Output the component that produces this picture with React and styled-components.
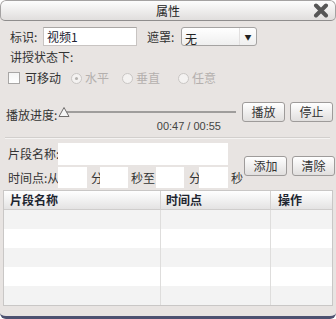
import React from 'react'
import styled, { createGlobalStyle } from 'styled-components'

const GlobalStyle = createGlobalStyle`
  html, body { margin: 0; padding: 0; background: #ffffff; }
  body { font-family: "Noto Sans CJK SC", "Liberation Sans", sans-serif; font-size: 12px; color: #333; }
  * { box-sizing: border-box; }
`

const Window = styled.div`
  width: 336px;
  height: 319px;
  background: #e8e4e2;
  border-radius: 6px;
  border-bottom: 3px solid #4d5170;
  display: flex;
  flex-direction: column;
  overflow: hidden;
`

const TitleBar = styled.div`
  height: 21px;
  flex: none;
  display: grid;
  grid-template-columns: 1fr auto 1fr;
  align-items: center;
  background: linear-gradient(#fdfdfd, #e0dedd);
  border: 1px solid #a4a2a2;
  border-bottom-color: #8f8d8d;
  border-radius: 6px 6px 5px 5px;
  font-size: 12px;
  color: #222;
`

const Title = styled.span`
  grid-column: 2;
  line-height: 19px;
`

const Close = styled.span`
  grid-column: 3;
  justify-self: end;
  margin-right: 6px;
  display: flex;
`

const Body = styled.div`
  flex: 1;
  display: flex;
  flex-direction: column;
  padding: 0 3px;
`

const Row = styled.div`
  display: flex;
  align-items: center;
  height: ${p => p.$h || 19}px;
  margin-top: ${p => p.$mt || 0}px;
  padding-left: ${p => p.$pl || 0}px;
`

const Label = styled.span`
  width: ${p => p.$w ? p.$w + 'px' : 'auto'};
  margin-left: ${p => p.$ml || 0}px;
  margin-right: ${p => p.$mr || 0}px;
  flex: none;
  white-space: nowrap;
  color: ${p => p.$dim ? '#b4b0ae' : '#333'};
  line-height: 14px;
`

const TextBox = styled.div`
  width: ${p => p.$w}px;
  height: ${p => p.$h || 19}px;
  background: #fff;
  border: 1px solid ${p => p.$plain ? '#ffffff' : '#c8c4c2'};
  border-top-color: ${p => p.$plain ? '#ffffff' : '#a9a6a4'};
  flex: none;
  padding: 2px 3px 0;
  font-size: 12px;
  line-height: 14px;
  color: #223;
`

const Select = styled.div`
  width: 76px;
  height: 19px;
  flex: none;
  display: flex;
  align-items: center;
  background: linear-gradient(#ffffff, #efefef);
  border: 1px solid #a5a3a2;
  border-radius: 3px;
  color: #222;
`

const SelectText = styled.span`
  flex: 1;
  padding-left: 3px;
  padding-top: 3px;
`

const SelectArrow = styled.span`
  width: 17px;
  height: 100%;
  border-left: 1px solid #e2e0e0;
  display: flex;
  align-items: center;
  justify-content: center;
  font-size: 7px;
  color: #222;
`

const Check = styled.span`
  width: 12px;
  height: 12px;
  flex: none;
  background: linear-gradient(#f4f4f4, #ffffff);
  border: 1px solid #a8a6a5;
  margin-right: 5px;
`

const Radio = styled.span`
  width: 11px;
  height: 11px;
  flex: none;
  border-radius: 50%;
  border: 1px solid #c9c6c4;
  background: #f4f2f1;
  margin-left: ${p => p.$ml || 0}px;
  margin-right: 3px;
  display: flex;
  align-items: center;
  justify-content: center;
  &::after {
    content: '';
    width: 3px;
    height: 3px;
    border-radius: 50%;
    background: ${p => p.$on ? '#b5b2b0' : 'transparent'};
  }
`

const Player = styled.div`
  display: flex;
  margin-top: 17px;
  height: 33px;
`

const SliderArea = styled.div`
  display: flex;
  flex-direction: column;
  width: 180px;
  margin-left: 1px;
`

const Track = styled.div`
  position: relative;
  height: 20px;
  display: flex;
  align-items: center;
  padding-left: 4px;
  &::before {
    content: '';
    height: 2px;
    width: 174px;
    background: #9f9d9c;
  }
`

const Thumb = styled.svg`
  position: absolute;
  left: 0;
  top: 4px;
`

const Time = styled.div`
  font-family: "Liberation Sans", sans-serif;
  font-size: 11px;
  text-align: right;
  padding-right: 16px;
  color: #444;
  line-height: 12px;
  margin-top: -2px;
  white-space: pre;
`

const Buttons = styled.div`
  display: flex;
  gap: 5px;
  margin-left: ${p => p.$ml || 0}px;
  align-self: ${p => p.$center ? 'center' : 'flex-start'};
`

const Button = styled.button`
  width: 43px;
  height: 20px;
  padding: 0;
  font-family: inherit;
  font-size: 12px;
  color: #333;
  background: linear-gradient(#ffffff, #e1dfde);
  border: 1px solid #9e9b9a;
  border-radius: 3px;
  line-height: 16px;
`

const Separator = styled.div`
  height: 2px;
  margin: 2px 3px 0 2px;
  border-top: 1px solid #d2cfcd;
  border-bottom: 1px solid #f5f3f2;
`

const Segment = styled.div`
  display: flex;
  margin-top: 4px;
`

const SegmentFields = styled.div`
  display: flex;
  flex-direction: column;
  gap: 2px;
  padding-left: 5px;
`

const Table = styled.div`
  margin-top: 2px;
  width: 330px;
  display: grid;
  grid-template-columns: 157px 110px 1fr;
  border: 1px solid #c9c7c6;
  background: #fff;
`

const HeadCell = styled.div`
  height: 19px;
  background: linear-gradient(#ffffff, #e4e3e3);
  border-right: ${p => p.$last ? 'none' : '1px solid #d4d2d1'};
  border-bottom: 1px solid #cfcdcc;
  font-weight: bold;
  color: #1d2530;
  padding-left: ${p => p.$pl || 6}px;
  line-height: 18px;
`

const Cell = styled.div`
  height: 19px;
  background: ${p => p.$alt ? '#f3f3f3' : '#ffffff'};
  border-right: ${p => p.$last ? 'none' : '1px solid #dedddc'};
`

const CloseIcon = () => (
  <svg width="16" height="15" viewBox="0 0 16 15">
    <path d="M3 2.5 L13 12.5 M13 2.5 L3 12.5" stroke="#565656" strokeWidth="4" strokeLinecap="round" />
  </svg>
)

const rows = [0, 1, 2, 3, 4]

export default function App() {
  return (
    <>
      <GlobalStyle />
      <Window>
        <TitleBar>
          <Title>属性</Title>
          <Close><CloseIcon /></Close>
        </TitleBar>
        <Body>
          <Row $mt={6} $pl={7}>
            <Label $w={33}>标识:</Label>
            <TextBox $w={94}>视频1</TextBox>
            <Label $ml={10} $w={34}>遮罩:</Label>
            <Select>
              <SelectText>无</SelectText>
              <SelectArrow>▼</SelectArrow>
            </Select>
          </Row>
          <Row $mt={4} $h={14} $pl={7}>
            <Label>讲授状态下:</Label>
          </Row>
          <Row $mt={7} $h={14} $pl={5}>
            <Check />
            <Label>可移动</Label>
            <Radio $ml={10} $on />
            <Label $dim>水平</Label>
            <Radio $ml={13} />
            <Label $dim>垂直</Label>
            <Radio $ml={18} />
            <Label $dim>任意</Label>
          </Row>
          <Player>
            <Label style={{ marginTop: 6, marginLeft: 3 }}>播放进度:</Label>
            <SliderArea>
              <Track>
                <Thumb width="12" height="12" viewBox="0 0 12 12">
                  <path d="M6 1.5 L11 10.5 L1 10.5 Z" fill="#f6f6f6" stroke="#6f6d6c" strokeWidth="1" />
                </Thumb>
              </Track>
              <Time>00:47 / 00:55</Time>
            </SliderArea>
            <Buttons $ml={5}>
              <Button>播放</Button>
              <Button>停止</Button>
            </Buttons>
          </Player>
          <Separator />
          <Segment>
            <SegmentFields>
              <Row $h={22}>
                <Label $w={50}>片段名称:</Label>
                <TextBox $w={170} $h={22} $plain />
              </Row>
              <Row $h={21}>
                <Label $w={50}>时间点:从</Label>
                <TextBox $w={29} $h={21} $plain />
                <Label $ml={4} $w={9}>分</Label>
                <TextBox $w={28} $h={21} $plain />
                <Label $ml={3} $w={25}>秒至</Label>
                <TextBox $w={28} $h={21} $plain />
                <Label $ml={5} $w={10}>分</Label>
                <TextBox $w={29} $h={21} $plain />
                <Label $ml={3}>秒</Label>
              </Row>
            </SegmentFields>
            <Buttons $ml={1} $center>
              <Button>添加</Button>
              <Button>清除</Button>
            </Buttons>
          </Segment>
          <Table>
            <HeadCell>片段名称</HeadCell>
            <HeadCell $pl={5}>时间点</HeadCell>
            <HeadCell $pl={7} $last>操作</HeadCell>
            {rows.map(r => (
              <React.Fragment key={r}>
                <Cell $alt={r % 2 === 0} />
                <Cell $alt={r % 2 === 0} />
                <Cell $alt={r % 2 === 0} $last />
              </React.Fragment>
            ))}
          </Table>
        </Body>
      </Window>
    </>
  )
}
